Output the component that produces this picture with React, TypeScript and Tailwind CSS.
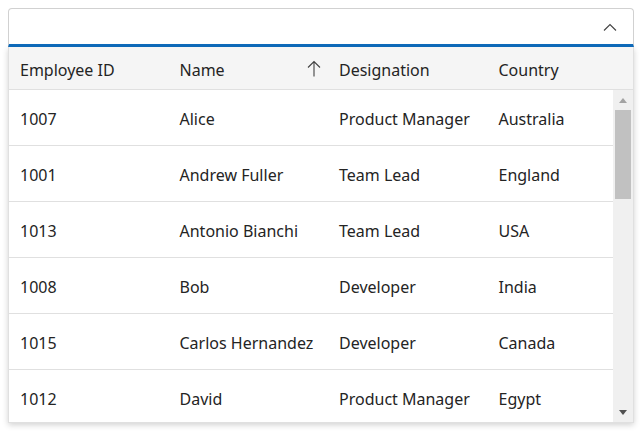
import React from "react";

const rows = [
  ["1007", "Alice", "Product Manager", "Australia"],
  ["1001", "Andrew Fuller", "Team Lead", "England"],
  ["1013", "Antonio Bianchi", "Team Lead", "USA"],
  ["1008", "Bob", "Developer", "India"],
  ["1015", "Carlos Hernandez", "Developer", "Canada"],
  ["1012", "David", "Product Manager", "Egypt"],
];

export default function App() {
  return (
    <div
      className="w-[642px] h-[431px] bg-white p-2 text-[#242424]"
      style={{ fontFamily: '"Noto Sans", "Open Sans", sans-serif' }}
    >
      <div className="h-[39px] border border-[#d1d1d1] border-b-[3px] border-b-[#0f6cbd] rounded-t-[4px] flex items-center justify-end pr-[16px]">
        <svg width="14" height="8" viewBox="0 0 14 8" fill="none">
          <path d="M1 7.5L7 1.5L13 7.5" stroke="#424242" strokeWidth="1.1" />
        </svg>
      </div>
      <div className="h-[376px] border border-[#e0e0e0] border-t-0 shadow-[0_2px_6px_rgba(0,0,0,0.18)] flex flex-col overflow-hidden bg-white text-[16px]">
        <div className="h-[43px] shrink-0 bg-[#f5f5f5] border-b border-[#e0e0e0] flex pt-[3px]">
          <div className="w-[159.5px] shrink-0 pl-[11px] flex items-center">Employee ID</div>
          <div className="w-[159.5px] shrink-0 pl-[11px] pr-[7px] flex items-center justify-between">
            <span>Name</span>
            <svg width="14" height="17" viewBox="0 0 14 17" fill="none" className="-mt-[3px]">
              <path d="M7 16.5V1.5M1 7.5L7 1.5L13 7.5" stroke="#424242" strokeWidth="1.1" />
            </svg>
          </div>
          <div className="w-[159.5px] shrink-0 pl-[11px] flex items-center">Designation</div>
          <div className="w-[159.5px] shrink-0 pl-[11px] flex items-center">Country</div>
        </div>
        <div className="flex flex-1 min-h-0">
          <div className="flex-1 min-w-0 overflow-hidden">
            {rows.map((r) => (
              <div key={r[0]} className="h-[56px] border-b border-[#e0e0e0] flex pt-[2px]">
                {r.map((c, i) => (
                  <div
                    key={i}
                    className="w-[159.5px] shrink-0 pl-[11px] flex items-center whitespace-nowrap"
                  >
                    {c}
                  </div>
                ))}
              </div>
            ))}
          </div>
          <div className="w-[20px] shrink-0 bg-[#f0f0f0] flex flex-col items-center">
            <div className="h-[20px] w-full flex items-center justify-center">
              <div className="w-0 h-0 border-l-[4px] border-r-[4px] border-b-[5px] border-l-transparent border-r-transparent border-b-[#a3a3a3]" />
            </div>
            <div className="w-[16px] h-[89px] bg-[#c1c1c1]" />
            <div className="flex-1" />
            <div className="h-[20px] w-full flex items-center justify-center">
              <div className="w-0 h-0 border-l-[4px] border-r-[4px] border-t-[5px] border-l-transparent border-r-transparent border-t-[#505050]" />
            </div>
          </div>
        </div>
      </div>
    </div>
  );
}
